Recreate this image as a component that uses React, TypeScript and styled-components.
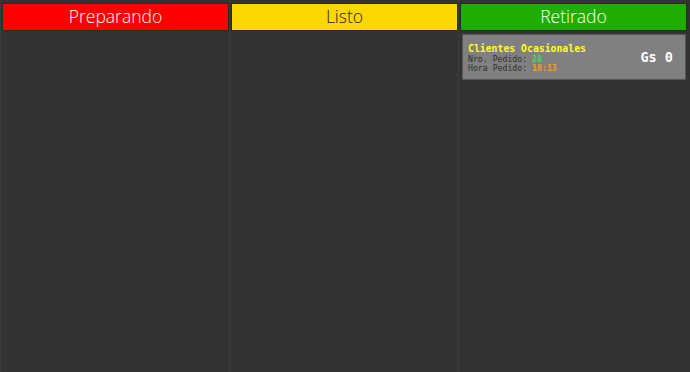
import styled, { createGlobalStyle } from 'styled-components'

const GlobalStyle = createGlobalStyle`
  html, body {
    margin: 0;
    padding: 0;
    background: #333333;
  }
  * {
    box-sizing: border-box;
  }
`

type TStatus = {
  title: string
  bg: string
  fg: string
}

type TOrder = {
  client: string
  number: number
  time: string
  total: string
}

const columns: (TStatus & { orders: TOrder[] })[] = [
  { title: 'Preparando', bg: '#ff0000', fg: '#ffffff', orders: [] },
  { title: 'Listo', bg: '#ffd700', fg: '#222222', orders: [] },
  {
    title: 'Retirado',
    bg: '#1fae00',
    fg: '#ffffff',
    orders: [{ client: 'Clientes Ocasionales', number: 28, time: '18:13', total: 'Gs 0' }],
  },
]

export default function App() {
  return (
    <>
      <GlobalStyle />
      <S_Board>
        {columns.map(col => (
          <S_Column key={col.title}>
            <S_Header $bg={col.bg} $fg={col.fg}>
              {col.title}
            </S_Header>
            {col.orders.map(order => (
              <S_Card key={order.number}>
                <div>
                  <S_Client>{order.client}</S_Client>
                  <S_Line>
                    Nro. Pedido: <S_Value $color='#3fe04a'>{order.number}</S_Value>
                  </S_Line>
                  <S_Line>
                    Hora Pedido: <S_Value $color='#ff9a1a'>{order.time}</S_Value>
                  </S_Line>
                </div>
                <S_Total>{order.total}</S_Total>
              </S_Card>
            ))}
          </S_Column>
        ))}
      </S_Board>
    </>
  )
}

const S_Board = styled.main`
  display: grid;
  grid-template-columns: repeat(3, 229px);
  height: 372px;
  overflow: hidden;
`

const S_Column = styled.section`
  display: flex;
  flex-direction: column;
  gap: 3px;
  padding: 3px 0 3px 1px;
  border-left: 1px solid #3b3b3b;
`

const S_Header = styled.h2<{ $bg: string; $fg: string }>`
  margin: 0;
  height: 28px;
  display: flex;
  align-items: center;
  justify-content: center;
  background: ${p => p.$bg};
  color: ${p => p.$fg};
  border: 1px solid #2a2a2a;
  font-family: 'Open Sans', 'Liberation Sans', sans-serif;
  font-weight: 300;
  font-size: 17.5px;
  line-height: 1;
`

const S_Card = styled.article`
  display: flex;
  align-items: center;
  justify-content: space-between;
  height: 46px;
  margin: 0 1px 0 2px;
  padding: 5px 12px 5px 5px;
  background: #808080;
  border: 1px solid #555555;
  font-family: 'DejaVu Sans Mono', 'Liberation Mono', monospace;
`

const S_Client = styled.div`
  color: #ffff1a;
  font-weight: 700;
  font-size: 9.8px;
  line-height: 13px;
`

const S_Line = styled.div`
  color: #2e2e2e;
  font-size: 8.2px;
  line-height: 9px;
`

const S_Value = styled.span<{ $color: string }>`
  color: ${p => p.$color};
  font-weight: 700;
`

const S_Total = styled.div`
  color: #ffffff;
  font-weight: 700;
  font-size: 13.5px;
`
